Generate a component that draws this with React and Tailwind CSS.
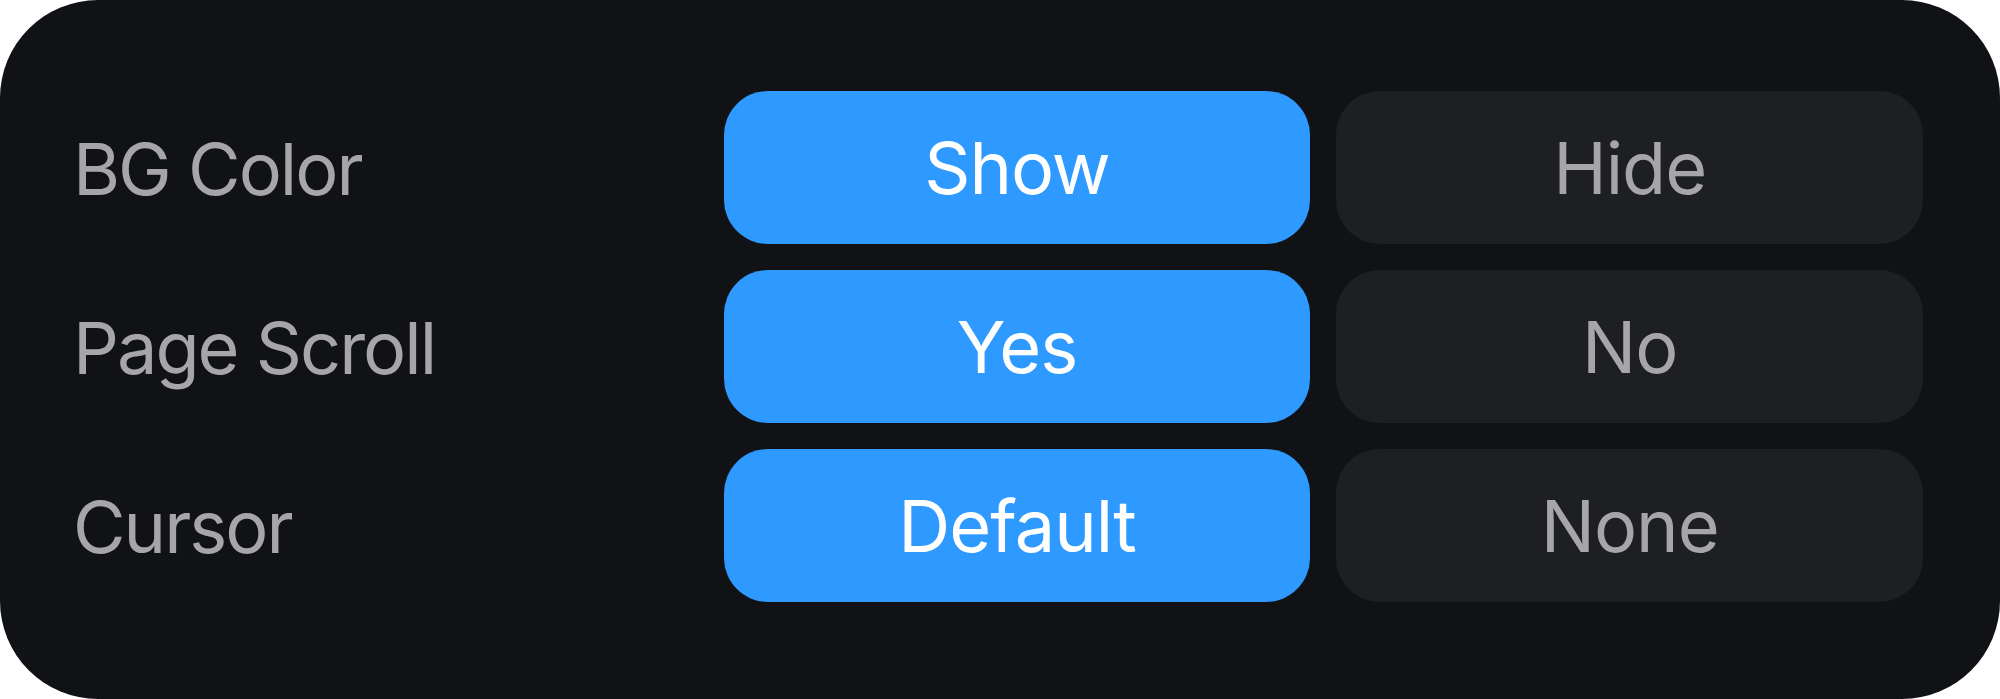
export default function App() {
  const rows = [
    { label: "BG Color", on: "Show", off: "Hide" },
    { label: "Page Scroll", on: "Yes", off: "No" },
    { label: "Cursor", on: "Default", off: "None" },
  ];
  return (
    <div className="w-[2000px] h-[699px] bg-white">
      <div
        className="w-full h-full bg-[#111216] rounded-[98px] pl-[73px] pr-[77px] pt-[91px] pb-[97px] flex flex-col gap-[26px]"
        style={{ fontFamily: "Inter, 'Noto Sans', sans-serif" }}
      >
        {rows.map((r) => (
          <div key={r.label} className="flex items-center gap-[26px] h-[153px]">
            <div className="w-[625px] text-[72px] leading-none text-[#a6a6a8] pt-[2px] tracking-[-2px]">
              {r.label}
            </div>
            <div className="w-[587px] h-full rounded-[44px] bg-[#2e99ff] text-white text-[72px] flex items-center justify-center tracking-[-1px]">
              {r.on}
            </div>
            <div className="w-[587px] h-full rounded-[44px] bg-[#1e1f23] text-[#a6a6a8] text-[72px] flex items-center justify-center tracking-[-1px]">
              {r.off}
            </div>
          </div>
        ))}
      </div>
    </div>
  );
}
